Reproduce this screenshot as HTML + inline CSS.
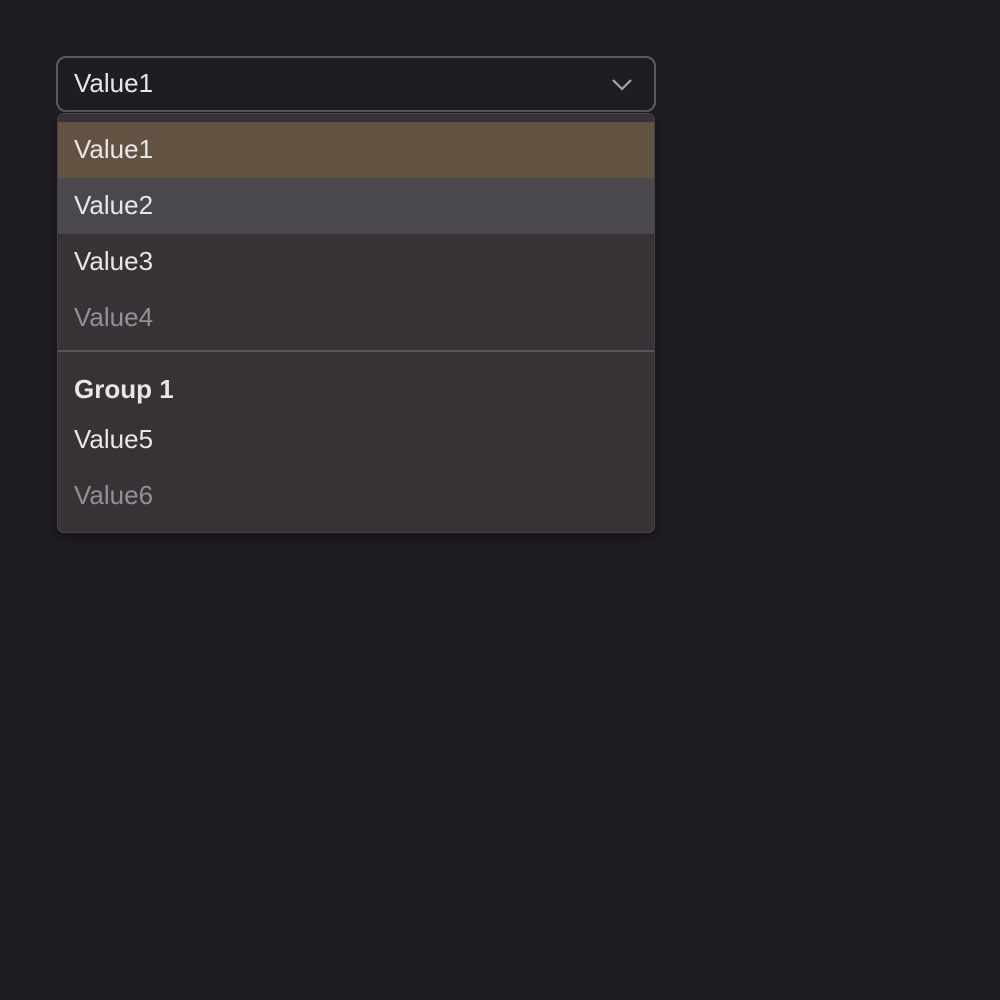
<!DOCTYPE html><html><head><style>
body{margin:0;background:#201d22;width:1000px;height:1000px;font-family:"Liberation Sans",sans-serif;color:#e8e6e8;}
.sel{position:absolute;left:56px;top:56px;width:596px;height:52px;border:2px solid #5d5a60;border-radius:10px;background:#201d22;}
.sel span{position:absolute;left:16px;top:10px;font-size:26px;}
.menu{position:absolute;left:57px;top:113px;width:596px;height:418px;border:1px solid #46424a;border-radius:7px;background:#363236;box-shadow:0 4px 12px rgba(0,0,0,.4);overflow:hidden;}
.it{position:absolute;left:0;width:596px;height:56px;font-size:26px;line-height:54px;padding-left:16px;box-sizing:border-box;}
</style></head><body>
<div class="sel"><span>Value1</span>
<svg style="position:absolute;left:552px;top:18px" width="24" height="16"><path d="M3 4 L12 13 L21 4" stroke="#a9a6ab" stroke-width="2.2" fill="none"/></svg></div>
<div class="menu">
<div class="it" style="top:8px;background:#615242">Value1</div>
<div class="it" style="top:64px;background:#4a484c">Value2</div>
<div class="it" style="top:120px">Value3</div>
<div class="it" style="top:176px;color:#948f95">Value4</div>
<div style="position:absolute;top:236px;left:0;width:596px;height:2px;background:#59555b"></div>
<div class="it" style="top:248px;font-weight:bold">Group 1</div>
<div class="it" style="top:298px">Value5</div>
<div class="it" style="top:354px;color:#948f95">Value6</div>
</div>
</body></html>
